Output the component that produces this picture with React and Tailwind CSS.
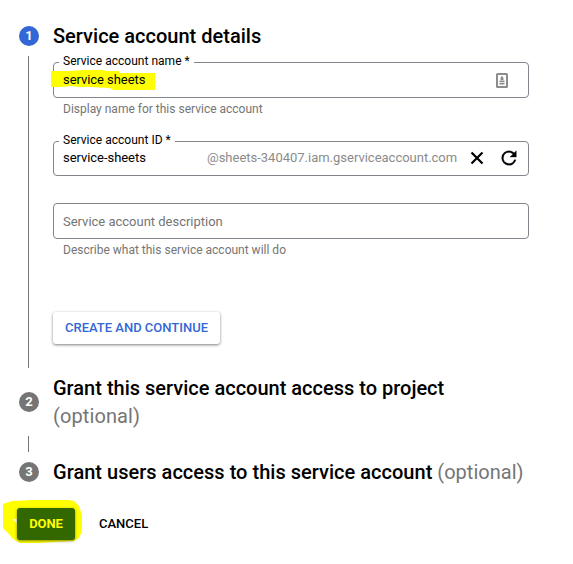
import React from "react";

const font = "font-['Roboto','Liberation_Sans',sans-serif]";

function Badge({ n, color }) {
  return (
    <div className={`flex h-5 w-5 shrink-0 items-center justify-center rounded-full pb-px text-[13px] font-bold leading-none text-white ${color}`}>
      {n}
    </div>
  );
}

function Field({ label, notch, value, children, highlight, height = "h-9" }) {
  return (
    <div className={`relative flex w-[476px] items-center rounded border border-[#80868b] pl-[9px] text-[13px] text-black ${height}`}>
      {label && (
        <span className={`absolute -top-[10px] left-[5px] h-4 whitespace-nowrap bg-white pl-1 text-xs leading-4 tracking-[0.02px] ${notch}`}>
          {label}
        </span>
      )}
      {highlight}
      {value}
      {children}
    </div>
  );
}

export default function App() {
  return (
    <main className={`h-[564px] w-[573px] overflow-hidden bg-white pt-[22px] pl-[19px] text-black ${font}`}>
      <section className="flex h-[346px] gap-[14px]">
        <div className="flex w-5 flex-col items-center pt-1">
          <Badge n="1" color="bg-[#3367d6]" />
          <div className="mt-[10px] mr-[1px] h-[312px] w-px bg-[#757575]" />
        </div>
        <div className="flex flex-col items-start">
          <h2 className="mb-3 h-7 whitespace-nowrap text-xl font-medium leading-7 tracking-[0.01px]">Service account details</h2>
          <Field
            label="Service account name *"
            notch="w-[135px]"
            highlight={
              <svg className="absolute -left-[3px] top-[6px]" width="104" height="22" viewBox="0 0 104 22">
                <path d="M0 2H18L33 1H53L55 2H68L69 4H104V21H63L58 19L40 18H28L20 17L10 18H0Z" fill="#ff0" />
              </svg>
            }
            value={<span className="relative tracking-[-0.05px]">service sheets</span>}
          >
            <svg className="ml-auto mr-5" width="12" height="15" viewBox="0 0 12 15">
              <rect x="1" y="1" width="10" height="13" rx="0.5" fill="#fff" stroke="#8c8c8c" strokeWidth="2" />
              <path d="M6 2.8L7.5 5v2h-3V5ZM3.5 7.5h5v1.7h-5ZM3.5 10h5v1.4h-5Z" fill="#8c8c8c" />
            </svg>
          </Field>
          <p className="mt-[3px] mb-6 ml-[10px] h-4 text-xs leading-4 text-[#757575]">Display name for this service account</p>
          <Field
            label="Service account ID *"
            notch="w-[116px]"
            height="h-[35px]"
            value={<span className="w-36 pb-[2px] tracking-[-0.05px]">service-sheets</span>}
          >
            <span className="pb-[2px] tracking-[-0.01px] text-[#8b8b8b]">@sheets-340407.iam.gserviceaccount.com</span>
            <svg className="absolute left-[416px] top-[9px]" width="14" height="14" viewBox="0 0 14 14">
              <path d="M1.5 1.5L12.5 12.5M12.5 1.5L1.5 12.5" fill="none" stroke="#000" strokeWidth="2.2" />
            </svg>
            <svg className="absolute left-[444px] top-[5px]" width="22" height="22" viewBox="0 0 24 24">
              <path d="M17.65 6.35A7.96 7.96 0 0 0 12 4a8 8 0 1 0 7.73 10h-2.08A6 6 0 1 1 12 6c1.66 0 3.14.69 4.22 1.78L13 11h7V4z" stroke="#000" strokeWidth="0.3" />
            </svg>
          </Field>
          <div className="mt-[27px]">
            <Field value={<span className="relative top-px tracking-[-0.01px] text-[#757575]">Service account description</span>} />
          </div>
          <p className="mt-[3px] ml-[10px] h-4 text-xs leading-4 text-[#757575]">Describe what this service account will do</p>
          <button className="mt-[54px] h-8 w-[167px] rounded-[3px] bg-white text-[13px] font-medium text-[#3367d6] shadow-[0_1px_3px_rgba(0,0,0,0.5)]">
            CREATE AND CONTINUE
          </button>
        </div>
      </section>
      <section className="mt-[6px] flex h-14 gap-[14px]">
        <div className="flex w-5 items-center"><Badge n="2" color="bg-[#757575]" /></div>
        <h2 className="whitespace-nowrap text-xl font-medium leading-7">
          Grant this service account access to project
          <span className="block font-normal tracking-[0.1px] text-[#757575]">(optional)</span>
        </h2>
      </section>
      <div className="mt-[6px] ml-[9px] h-4 w-px bg-[#757575]" />
      <section className="mt-[6px] flex h-7 items-center gap-[14px]">
        <Badge n="3" color="bg-[#757575]" />
        <h2 className="whitespace-nowrap text-xl font-medium leading-7 tracking-[0.02px]">
          Grant users access to this service account <span className="font-normal tracking-[0.02px] text-[#757575]">(optional)</span>
        </h2>
      </section>
      <div className="relative -ml-[2px] mt-[22px] flex h-8 items-center">
        <svg className="absolute -left-[14px] -top-[8px]" width="80" height="44" viewBox="0 0 80 44">
          <path d="M0 4L9 1L31 0H65L71 1L76 6L79 15V31L76 38L71 41L53 42L35 43H17L10 39L5 33L0 28Z" fill="#ff0" />
          <path d="M10 19h4v5z" fill="#fff" />
        </svg>
        <button className="relative h-8 w-[58px] rounded-[3px] bg-[#336700] text-[13px] font-bold tracking-[-0.1px] text-[#ff0] shadow-[0_1px_3px_rgba(60,60,0,0.6)]">DONE</button>
        <button className="ml-6 text-[13px] font-medium">CANCEL</button>
      </div>
    </main>
  );
}
